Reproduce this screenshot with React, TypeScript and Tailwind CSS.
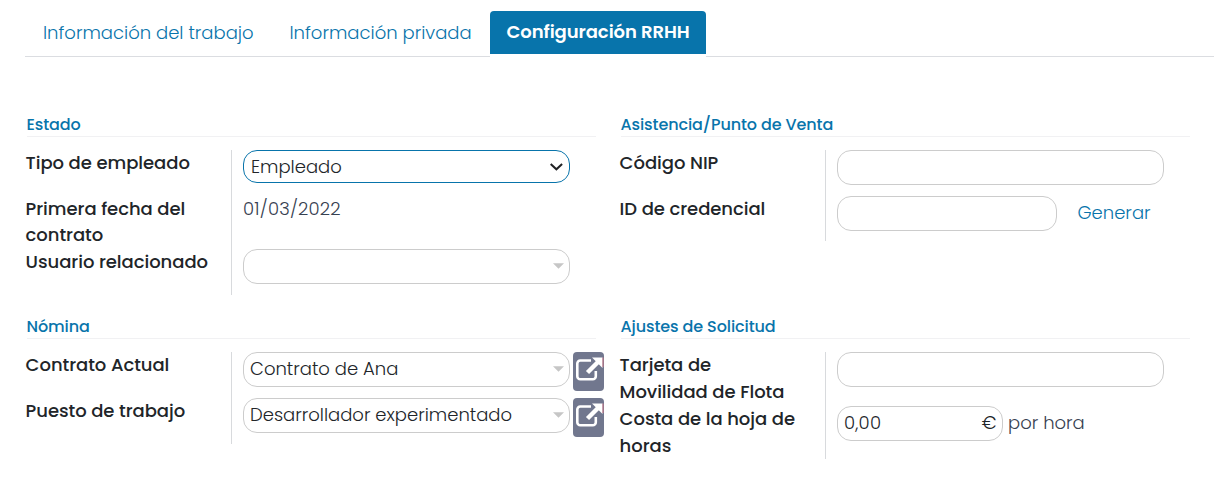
import type { ReactNode } from "react";

function Group({ title, children }: { title: string; children: ReactNode }) {
  return (
    <section>
      <h2 className="ml-[2px] h-[23px] w-[569px] border-b border-[#f1f1f3] text-[16px] leading-[22px] font-medium tracking-[-0.100px] whitespace-nowrap text-[#0874ab]">
        <span className="-ml-[0.500px]">{title}</span>
      </h2>
      <div className="mt-[13px]">{children}</div>
    </section>
  );
}

function Row({ lines, height, leading = "-mt-px leading-[27px]", children }: { lines: string[]; height: string; leading?: string; children: ReactNode }) {
  return (
    <div className={`flex ${height}`}>
      <div className="w-[206px] shrink-0 text-[18px] font-medium tracking-[-0.050px] whitespace-nowrap text-[#212529]">
        <div className={`pl-[0.600px] ${leading}`}>
          {lines.map((text) => (
            <div key={text}>{text}</div>
          ))}
        </div>
      </div>
      <div className="flex items-start border-l border-[#d8dadd] pl-[11px]">{children}</div>
    </div>
  );
}

function Field({ width = "w-[327px]", caret = false, children }: { width?: string; caret?: boolean; children?: ReactNode }) {
  return (
    <div className={`flex h-[35px] shrink-0 items-center justify-between rounded-[14px] border border-[#ccc] bg-white pr-[5px] pl-[6px] text-[18px] font-light whitespace-nowrap text-[#212529] ${width}`}>
      <span className="pb-[2px]">{children}</span>
      {caret && (
        <svg width="11" height="6" viewBox="0 0 11 6" className="-mt-px"><path d="M0 .3h11L5.5 5.8z" fill="#c6c6c6" /></svg>
      )}
    </div>
  );
}

function OpenButton() {
  return (
    <button className="ml-[3px] h-[39px] w-[31px] shrink-0 rounded-[4px] bg-[#71778e]">
      <svg width="31" height="39" viewBox="0 0 31 39" fill="none">
        <path d="M18 8.500H7.300a3 3 0 0 0-3 3v12.700a3 3 0 0 0 3 3h12.500a3 3 0 0 0 3-3V19" stroke="#fff" strokeWidth="2.600" />
        <path d="M14.500 20.500 26 9" stroke="#fff" strokeWidth="4.500" />
        <path d="M19 5.500H29.500V16z" fill="#fff" />
        <path d="M30 5.500V15" stroke="#e17583" strokeWidth=".8" />
      </svg>
    </button>
  );
}

export default function App() {
  return (
    <main className="h-[480px] w-[1218px] overflow-hidden bg-white pt-[11px] pl-[25px] [font-family:Poppins,Inter,'Noto_Sans',sans-serif]">
      <nav className="flex h-[46px] w-[1189px] items-stretch text-[18px] leading-[43px] whitespace-nowrap text-[#0874ab]">
        <a className="w-[247px] border-b border-[#dbdde1] pl-[18px] font-light">Información del trabajo</a>
        <a className="w-[218px] border-b border-[#dbdde1] pl-[17.500px] font-light">Información privada</a>
        <a className="h-[43px] w-[216px] rounded-t-[4px] bg-[#0874ab] pl-[16.500px] leading-[41px] font-semibold tracking-[-0.070px] text-white">Configuración RRHH</a>
        <div className="flex-1 border-b border-[#dbdde1]" />
      </nav>

      <div className="grid grid-cols-[594px_571px] pt-[57px]">
        <div className="h-[202px]">
          <Group title="Estado">
            <Row height="h-[46px]" lines={["Tipo de empleado"]}>
              <div className="flex h-[33px] w-[327px] items-center justify-between rounded-[14px] border border-[#0874ab] pr-[6px] pl-[7px] text-[18px] font-light text-[#212529]">
                <span className="pb-px">Empleado</span>
                <svg width="14" height="10" viewBox="0 0 14 10" fill="none"><path d="m1.700 2 5.700 5.300L13.100 2" stroke="#202124" strokeWidth="2" /></svg>
              </div>
            </Row>
            <Row height="h-[53px]" leading="leading-[26px]" lines={["Primera fecha del", "contrato"]}>
              <span className="-mt-px text-[18px] leading-[27px] font-light tracking-[0.200px] text-[#374151]">01/03/2022</span>
            </Row>
            <Row height="h-[46px]" lines={["Usuario relacionado"]}>
              <Field caret />
            </Row>
          </Group>
        </div>

        <Group title="Asistencia/Punto de Venta">
          <Row height="h-[46px]" lines={["Código NIP"]}>
            <Field />
          </Row>
          <Row height="h-[45px]" lines={["ID de credencial"]}>
            <Field width="w-[220px]" />
            <a className="pl-[20.500px] text-[18px] leading-[33px] font-light text-[#0874ab]">Generar</a>
          </Row>
        </Group>

        <Group title="Nómina">
          <Row height="h-[46px]" lines={["Contrato Actual"]}>
            <Field caret>Contrato de Ana</Field>
            <OpenButton />
          </Row>
          <Row height="h-[46px]" lines={["Puesto de trabajo"]}>
            <Field caret>Desarrollador experimentado</Field>
            <OpenButton />
          </Row>
        </Group>

        <Group title="Ajustes de Solicitud">
          <Row height="h-[54px]" lines={["Tarjeta de", "Movilidad de Flota"]}>
            <Field />
          </Row>
          <Row height="h-[53px]" lines={["Costa de la hoja de", "horas"]}>
            <Field width="w-[166px]">
              <span className="flex w-[152.500px] justify-between"><span className="tracking-[0.200px]">0,00</span><span>€</span></span>
            </Field>
            <span className="pl-[5px] text-[18px] leading-[33px] font-light text-[#374151]">por hora</span>
          </Row>
        </Group>
      </div>
    </main>
  );
}
